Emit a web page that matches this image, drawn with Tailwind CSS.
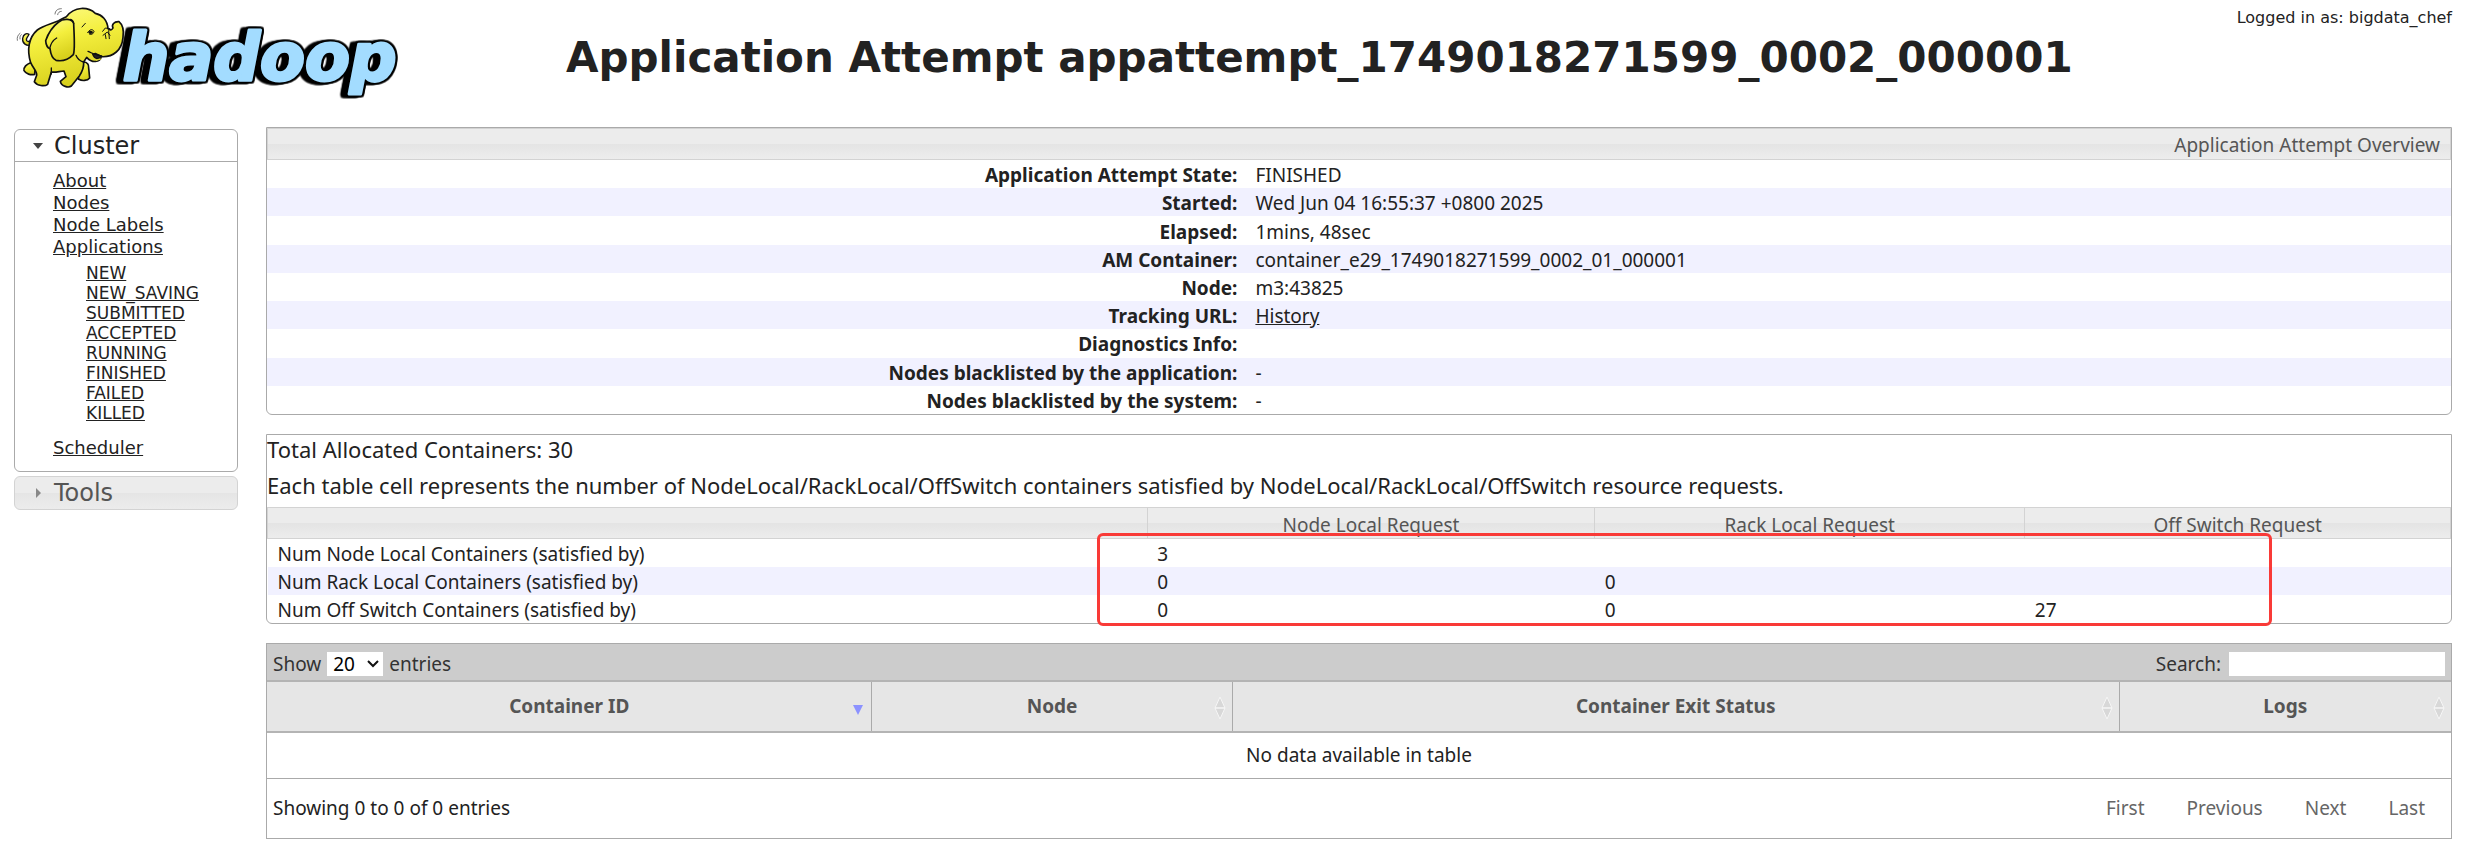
<!DOCTYPE html>
<html lang="en">
<head>
<meta charset="utf-8">
<title>Application Attempt appattempt_1749018271599_0002_000001</title>
<script src="https://cdn.jsdelivr.net/npm/@tailwindcss/browser@4"></script>
</head>
<body class="bg-white font-['Noto_Sans',sans-serif] text-[19px] text-[#222222]">

<header class="flex items-start pr-3.5 font-['DejaVu_Sans',sans-serif]">
  <a href="#" class="block shrink-0" aria-label="hadoop">
    <svg class="block h-[100px] w-[402px]" viewBox="0 0 1206 300">
      <defs>
        <linearGradient id="skin" x1="0" y1="0" x2="0.3" y2="1">
          <stop offset="0" stop-color="#fdfb8a"/><stop offset="0.45" stop-color="#f4ef3e"/><stop offset="1" stop-color="#d8d01c"/>
        </linearGradient>
      </defs>
      <text x="368" y="241" font-size="196" font-weight="bold" font-style="italic" fill="#a3dcff" stroke="#a3dcff" stroke-width="9" stroke-linejoin="round" class="[filter:drop-shadow(5px_0_0_#000)_drop-shadow(-5px_0_0_#000)_drop-shadow(0_5px_0_#000)_drop-shadow(0_-5px_0_#000)_drop-shadow(-16px_2px_0_#000)]">hadoop</text>
      <!-- elephant -->
      <g stroke="#111" stroke-width="5" stroke-linejoin="round" stroke-linecap="round" fill="url(#skin)">
        <path d="M93 134 C80 140 66 130 68 115 C70 102 80 98 87 103 C84 112 76 114 80 122 C84 127 90 124 95 121" stroke-width="4"/>
        <path d="M92 188 C80 192 70 202 72 212 C78 222 92 226 104 223 L106 200Z"/>
        <path d="M250 186 C262 186 267 194 266 204 L269 234 C262 243 246 243 236 238 L232 205Z"/>
        <path d="M176 62 C154 72 130 76 112 90 C86 112 80 150 92 188 C100 206 112 214 110 226 L103 245 C112 258 134 260 143 253 L154 216 C166 218 178 214 192 213 L198 230 L181 244 C184 260 206 264 214 258 L238 228 C246 216 252 202 251 186 L260 172 C276 190 300 188 304 170 C340 172 366 150 369 112 C372 90 368 74 357 65 C342 64 334 74 339 84 C336 90 330 92 324 86 C322 60 306 44 286 40 C264 20 224 18 199 50 C190 54 182 58 176 62Z"/>
        <path d="M278 163 C284 178 296 180 303 168 L286 160Z" fill="#222" stroke-width="4"/>
        <path d="M289 181 L303 177" stroke="#e9e231" stroke-width="3"/>
        <path d="M221 70 C216 56 190 54 176 66 C160 78 146 96 137 122 C138 138 144 144 150 146 C152 162 156 176 168 181 C192 186 208 176 220 164 C226 148 222 100 221 70Z"/>
        <path d="M149 146 C152 130 160 120 170 114 M221 70 C220 64 218 60 212 58" fill="none" stroke-width="4"/>
        <path d="M264 154 C278 160 286 166 305 168 M154 204 L154 222 M250 186 C242 184 232 176 228 166" fill="none" stroke-width="4"/>
        <path d="M246 81 L256 70 M263 98 C268 88 278 86 282 94 C280 102 274 106 268 102 M308 94 L316 84 L330 86 M309 106 L322 96 L330 106 M326 92 L328 116 M316 104 L318 116" fill="none" stroke-width="3"/>
        <ellipse cx="272" cy="97" rx="7" ry="5" fill="#111" stroke="none"/>
        <path d="M165 42 C166 32 172 26 184 26 M173 44 C174 38 178 34 184 34 M52 121 C50 112 54 104 60 100 M60 117 C59 110 61 106 64 104" fill="none" stroke="#777" stroke-width="3"/>
      </g>
    </svg>
  </a>
  <h1 class="flex-1 pt-[33px] text-center text-[42px] leading-[50px] font-bold whitespace-nowrap">Application Attempt appattempt_1749018271599_0002_000001</h1>
  <div class="shrink-0 pt-2 text-[16px] leading-5">Logged in as: bigdata_chef</div>
</header>

<div class="flex items-start gap-7 px-3.5">

  <nav class="mt-[29px] w-56 shrink-0 font-['DejaVu_Sans',sans-serif]">
    <section class="rounded-md border border-[#aaaaaa]">
      <h2><button type="button" class="flex h-8 w-full items-center gap-2.5 border-b border-[#aaaaaa] pt-px pl-[17px] text-[24px] leading-8">
        <svg class="size-3" viewBox="0 0 12 12"><path d="M1 3h10L6 9z" fill="#444"/></svg>Cluster</button></h2>
      <ul class="pt-2 pb-3 pl-[38px] text-[18px] leading-[22px]">
        <li><a href="#" class="underline">About</a></li>
        <li><a href="#" class="underline">Nodes</a></li>
        <li><a href="#" class="underline">Node Labels</a></li>
        <li><a href="#" class="underline">Applications</a>
          <ul class="pt-[5px] pb-3.5 pl-[33px] text-[17px] leading-5">
            <li><a href="#" class="underline">NEW</a></li>
            <li><a href="#" class="underline">NEW_SAVING</a></li>
            <li><a href="#" class="underline">SUBMITTED</a></li>
            <li><a href="#" class="underline">ACCEPTED</a></li>
            <li><a href="#" class="underline">RUNNING</a></li>
            <li><a href="#" class="underline">FINISHED</a></li>
            <li><a href="#" class="underline">FAILED</a></li>
            <li><a href="#" class="underline">KILLED</a></li>
          </ul>
        </li>
        <li><a href="#" class="underline">Scheduler</a></li>
      </ul>
    </section>
    <section class="mt-1">
      <h2><button type="button" class="flex w-full items-center gap-2.5 rounded-md border border-[#d3d3d3] bg-[linear-gradient(#ececec_50%,#e5e5e5_50%,#ececec)] pl-[17px] text-[24px] leading-8 text-[#555555]">
        <svg class="size-3" viewBox="0 0 12 12"><path d="M4 1v10l5-5z" fill="#888"/></svg>Tools</button></h2>
    </section>
  </nav>

  <main class="mt-[27px] min-w-0 flex-1">

    <section class="rounded-b-md border border-[#aaaaaa]">
      <h2 class="border border-[#d3d3d3] bg-[linear-gradient(#ececec_50%,#e4e4e4_50%,#ededed)] pt-0.5 pr-2.5 text-right leading-7 text-[#555555]">Application Attempt Overview</h2>
      <table class="h-[254px] w-full table-fixed border-collapse [&_td]:p-0 [&_td]:pt-0.5 [&_td]:pl-2.5 [&_td]:leading-[26px] [&_th]:p-0 [&_th]:pt-0.5 [&_th]:pr-2 [&_th]:text-right [&_th]:leading-[26px] [&_tr:nth-child(even)]:bg-[#f1f1ff]">
        <tbody>
          <tr><th scope="row" class="w-[44.8%]">Application Attempt State:</th><td>FINISHED</td></tr>
          <tr><th scope="row">Started:</th><td>Wed Jun 04 16:55:37 +0800 2025</td></tr>
          <tr><th scope="row">Elapsed:</th><td>1mins, 48sec</td></tr>
          <tr><th scope="row">AM Container:</th><td>container_e29_1749018271599_0002_01_000001</td></tr>
          <tr><th scope="row">Node:</th><td>m3:43825</td></tr>
          <tr><th scope="row">Tracking URL:</th><td><a href="#" class="underline">History</a></td></tr>
          <tr><th scope="row">Diagnostics Info:</th><td></td></tr>
          <tr><th scope="row">Nodes blacklisted by the application:</th><td>-</td></tr>
          <tr><th scope="row">Nodes blacklisted by the system:</th><td>-</td></tr>
        </tbody>
      </table>
    </section>

    <section class="relative mt-[19px] rounded-b-md border border-[#aaaaaa]">
      <div class="space-y-2 pb-2 text-[22px] leading-7">
        <p>Total Allocated Containers: 30</p>
        <p>Each table cell represents the number of NodeLocal/RackLocal/OffSwitch containers satisfied by NodeLocal/RackLocal/OffSwitch resource requests.</p>
      </div>
      <table class="h-[116px] w-full table-fixed border-collapse [&_td]:p-0 [&_td]:pt-0.5 [&_td]:pl-2.5 [&_td]:leading-[26px] [&_tbody_tr:nth-child(even)]:bg-[#f1f1ff]">
        <thead>
          <tr class="bg-[linear-gradient(#ececec_50%,#e4e4e4_50%,#ededed)] text-[#555555] *:border *:border-[#d3d3d3] *:p-0 *:pt-1 *:leading-[26px] *:font-normal">
            <td class="w-[40.3%]"></td>
            <th scope="col" class="w-[20.5%]">Node Local Request</th>
            <th scope="col" class="w-[19.7%]">Rack Local Request</th>
            <th scope="col">Off Switch Request</th>
          </tr>
        </thead>
        <tbody>
          <tr><td>Num Node Local Containers (satisfied by)</td><td>3</td><td></td><td></td></tr>
          <tr><td>Num Rack Local Containers (satisfied by)</td><td>0</td><td>0</td><td></td></tr>
          <tr><td>Num Off Switch Containers (satisfied by)</td><td>0</td><td>0</td><td>27</td></tr>
        </tbody>
      </table>
      <div class="absolute -bottom-[3px] left-[38%] h-[93px] w-[53.8%] rounded-md border-[3px] border-[#f93a37]"></div>
    </section>

    <section class="mt-[19px] border border-[#aaaaaa]">
      <div class="flex items-center justify-between bg-[#cccccc] px-1.5 pt-2 pb-1 leading-6 text-[#333333]">
        <label class="flex items-center gap-1.5">Show
          <span class="relative">
            <select class="block h-6 w-14 appearance-none bg-white pl-1.5 text-[19px] leading-6 text-black"><option>20</option></select>
            <svg class="pointer-events-none absolute top-2 right-1 h-2 w-3" viewBox="0 0 12 8" fill="none" stroke="#111" stroke-width="2"><path d="M1 1l5 5 5-5"/></svg>
          </span>
          entries</label>
        <label class="flex items-center gap-2">Search:
          <input type="text" class="h-6 w-[216px] bg-white px-1"></label>
      </div>
      <table class="w-full table-fixed border-collapse">
        <thead>
          <tr class="border-y-2 border-[#b4b4b4] bg-[#e6e6e6] text-[#555555] *:relative *:h-[51px] *:border-r *:border-r-[#aaaaaa] *:p-0">
            <th scope="col" class="w-[27.7%]">Container ID<svg class="absolute right-2 bottom-4 h-2.5 w-2.5" viewBox="0 0 10 10"><path d="M0 0h10L5 10z" fill="#8c92ff"/></svg></th>
            <th scope="col" class="w-[16.5%]">Node<svg class="absolute top-3.5 right-1.5 h-6 w-3" viewBox="0 0 12 24" fill="#d8d8d8" stroke="#f6f6f6"><path d="M1 12L6 1l5 11zM1 12h10L6 23z"/></svg></th>
            <th scope="col" class="w-[40.6%]">Container Exit Status<svg class="absolute top-3.5 right-1.5 h-6 w-3" viewBox="0 0 12 24" fill="#d8d8d8" stroke="#f6f6f6"><path d="M1 12L6 1l5 11zM1 12h10L6 23z"/></svg></th>
            <th scope="col" class="border-r-0!">Logs<svg class="absolute top-3.5 right-1.5 h-6 w-3" viewBox="0 0 12 24" fill="#d8d8d8" stroke="#f6f6f6"><path d="M1 12L6 1l5 11zM1 12h10L6 23z"/></svg></th>
          </tr>
        </thead>
        <tbody>
          <tr class="border-b border-[#aaaaaa]"><td colspan="4" class="h-[46px] p-0 text-center">No data available in table</td></tr>
        </tbody>
      </table>
      <div class="flex h-[59px] items-center justify-between pr-[26px] pl-1.5">
        <div>Showing 0 to 0 of 0 entries</div>
        <div class="flex gap-[42px] text-[#666666]">
          <button type="button">First</button>
          <button type="button">Previous</button>
          <button type="button">Next</button>
          <button type="button">Last</button>
        </div>
      </div>
    </section>
  </main>
</div>
</body>
</html>
